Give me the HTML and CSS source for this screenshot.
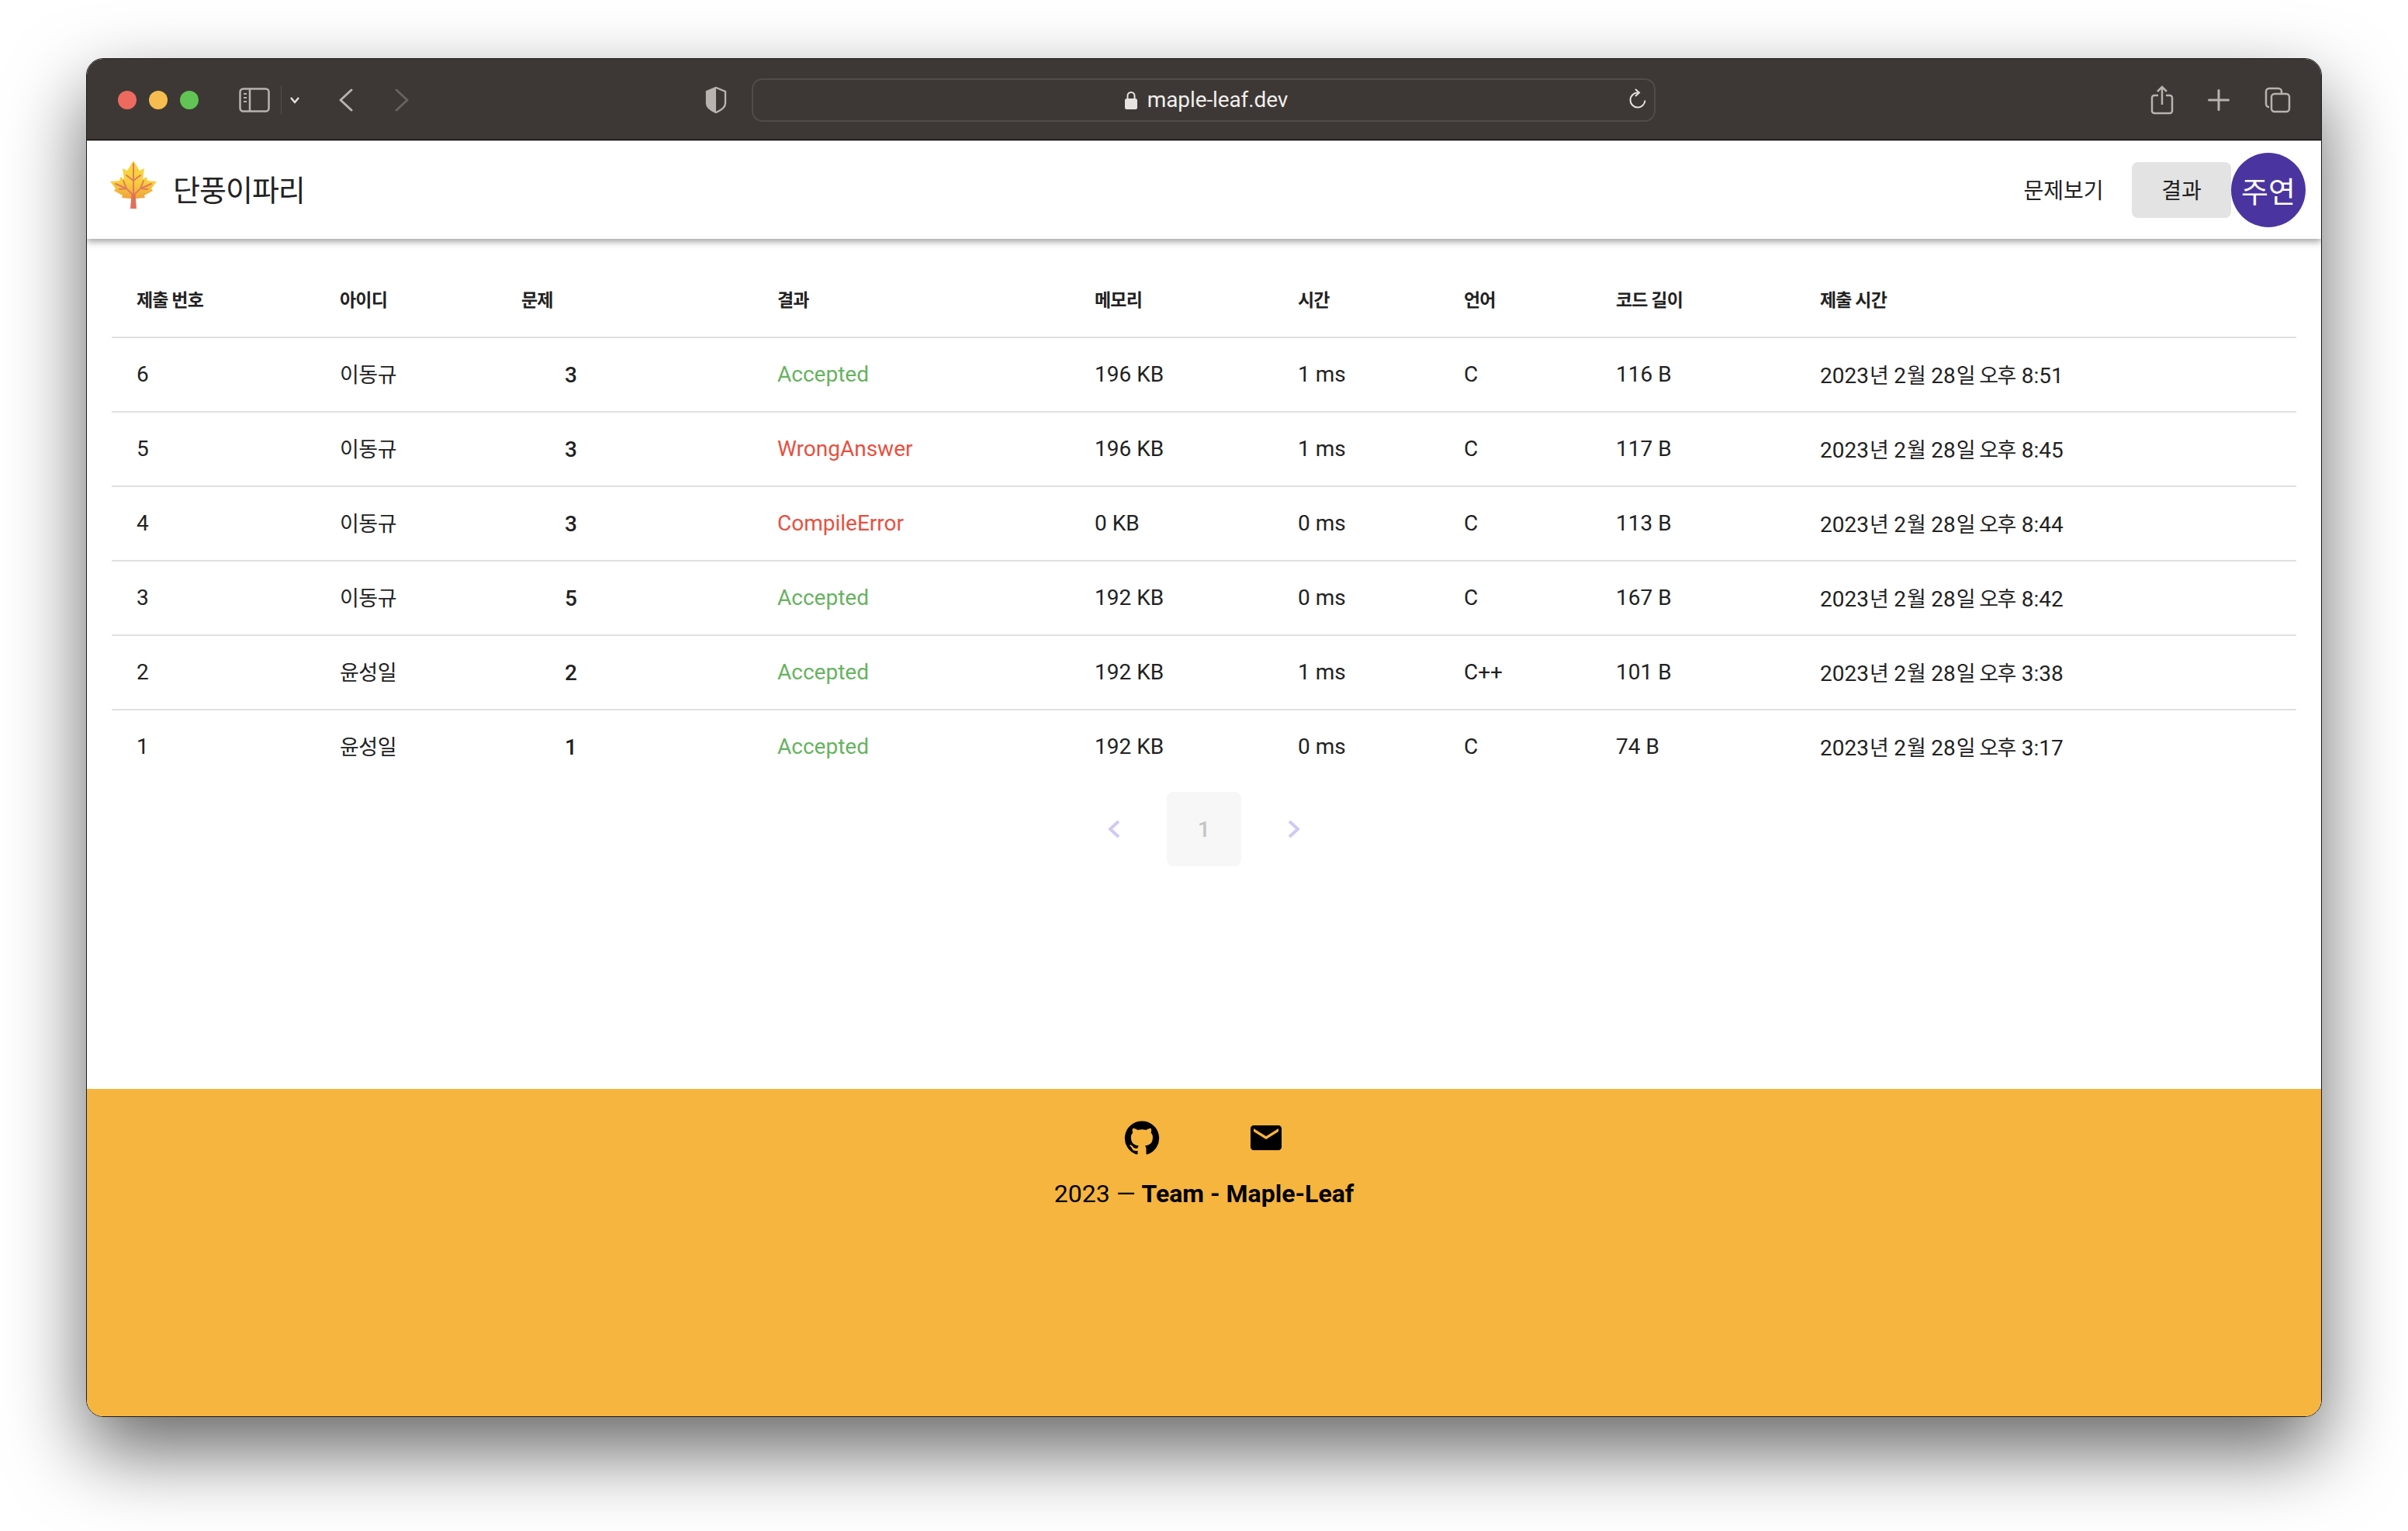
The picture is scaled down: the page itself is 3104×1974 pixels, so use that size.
FILE: index.html
```html
<!DOCTYPE html>
<html lang="ko">

<head>
    <meta charset="UTF-8">
    <title>단풍이파리</title>
    <link rel="stylesheet" href="styles.css">
</head>

<body>
    <div class="window">
        <div class="titlebar">
            <div class="lights">
                <span class="light red"></span>
                <span class="light yellow"></span>
                <span class="light green"></span>
            </div>
            <svg class="icon-sidebar" width="40" height="32" viewBox="0 0 40 32" fill="none" stroke="#b8b3af" stroke-width="2.5">
                <rect x="1.5" y="1.5" width="37" height="29" rx="4"/>
                <path d="M14 2v28"/>
                <path d="M6 8h4M6 13h4M6 18h4" stroke-width="2"/>
            </svg>
            <span class="sep"></span>
            <svg class="icon-down" width="14" height="10" viewBox="0 0 14 10" fill="none" stroke="#e8e4e1" stroke-width="2.4">
                <path d="M2 2l5 6 5-6"/>
            </svg>
            <svg class="icon-back" width="18" height="30" viewBox="0 0 18 30" fill="none" stroke="#b8b3af" stroke-width="3" stroke-linecap="round" stroke-linejoin="round">
                <path d="M16 2L2 15l14 13"/>
            </svg>
            <svg class="icon-forward" width="18" height="30" viewBox="0 0 18 30" fill="none" stroke="#68625f" stroke-width="3" stroke-linecap="round" stroke-linejoin="round">
                <path d="M2 2l14 13L2 28"/>
            </svg>
            <svg class="icon-shield" width="28" height="34" viewBox="0 0 28 34">
                <path d="M14 1l12 5v15c0 5-5 9-12 12C7 30 2 26 2 21V6z" fill="none" stroke="#b8b3af" stroke-width="2.4"/>
                <path d="M14 1L2 6v15c0 5 5 9 12 12z" fill="#b8b3af"/>
            </svg>
            <div class="address">
                <svg class="icon-lock" width="18" height="24" viewBox="0 0 18 24" fill="none">
                    <path d="M4.5 11V6.500a4.500 4.500 0 0 1 9 0V11" stroke="#e6e3e0" stroke-width="2"/>
                    <rect x="1" y="10" width="16" height="14" rx="2.500" fill="#e6e3e0"/>
                </svg>
                <span class="url">maple-leaf.dev</span>
                <svg class="icon-reload" width="24" height="28" viewBox="0 0 24 28" fill="none" stroke="#e6e3e0" stroke-width="2">
                    <path d="M12 5.500a9.500 9.500 0 1 0 9.500 10"/>
                    <path d="M9 1l5 4.500-5 4.500"/>
                </svg>
            </div>
            <svg class="icon-share" width="30" height="38" viewBox="0 0 30 38" fill="none" stroke="#b8b3af" stroke-width="2.500">
                <path d="M10 13H5a3 3 0 0 0-3 3v17a3 3 0 0 0 3 3h20a3 3 0 0 0 3-3V16a3 3 0 0 0-3-3h-5"/>
                <path d="M15 25V2M9 8l6-6 6 6"/>
            </svg>
            <svg class="icon-plus" width="28" height="28" viewBox="0 0 28 28" stroke="#b8b3af" stroke-width="3" stroke-linecap="round">
                <path d="M14 1.500v25M1.500 14h25"/>
            </svg>
            <svg class="icon-tabs" width="34" height="34" viewBox="0 0 34 34" fill="none" stroke="#b8b3af" stroke-width="2.500">
                <path d="M6 26a4 4 0 0 1-4-4V6a4 4 0 0 1 4-4h12a4 4 0 0 1 4 4v3"/>
                <rect x="9" y="9" width="23" height="23" rx="4"/>
            </svg>
        </div>

        <nav class="nav">
            <svg class="logo" width="60" height="64" viewBox="0 0 60 62">
                <defs>
                    <linearGradient id="leaf" x1="0" y1="0" x2="0" y2="1">
                        <stop offset="0" stop-color="#f9d640"/>
                        <stop offset="0.55" stop-color="#f8cf3f"/>
                        <stop offset="1" stop-color="#eea238"/>
                    </linearGradient>
                </defs>
                <path d="M30 0l8 13 6-3-2 14 5-3 1 5 12 1-7 9 2 3-11 6 1 3-11 1-4 1-4-1-11-1 1-3-11-6 2-3-7-9 12-1 1-5 5 3-2-14 6 3z" fill="url(#leaf)"/>
                <g fill="none" stroke="#e27a5c" stroke-width="2" stroke-linecap="round">
                    <path d="M30 4v44"/>
                    <path d="M21 19l9 7 9-7"/>
                    <path d="M7 30l14 6 9 9 9-9 14-6"/>
                    <path d="M12 37l9-1M48 37l-9-1M17 26l4 10M43 26l-4 10"/>
                </g>
                <path d="M27.500 44h5l1.500 18h-8z" fill="#e0705a"/>
            </svg>
            <span class="brand">단풍이파리</span>
            <div class="nav-right">
                <a class="nav-btn">문제보기</a>
                <a class="nav-btn active">결과</a>
                <span class="avatar">주연</span>
            </div>
        </nav>

        <main class="content">
            <table class="results">
                <colgroup>
                    <col class="c-no"><col class="c-id"><col class="c-prob"><col class="c-res"><col class="c-mem"><col class="c-time"><col class="c-lang"><col class="c-len"><col class="c-date">
                </colgroup>
                <thead>
                    <tr>
                        <th>제출 번호</th><th>아이디</th><th>문제</th><th>결과</th><th>메모리</th><th>시간</th><th>언어</th><th>코드 길이</th><th>제출 시간</th>
                    </tr>
                </thead>
                <tbody>
                    <tr>
                        <td>6</td><td class="ko">이동규</td><td class="prob">3</td><td class="ok">Accepted</td><td>196 KB</td><td>1 ms</td><td>C</td><td>116 B</td>
                        <td>2023<span class="ko">년</span> 2<span class="ko">월</span> 28<span class="ko">일 오후</span> 8:51</td>
                    </tr>
                    <tr>
                        <td>5</td><td class="ko">이동규</td><td class="prob">3</td><td class="bad">WrongAnswer</td><td>196 KB</td><td>1 ms</td><td>C</td><td>117 B</td>
                        <td>2023<span class="ko">년</span> 2<span class="ko">월</span> 28<span class="ko">일 오후</span> 8:45</td>
                    </tr>
                    <tr>
                        <td>4</td><td class="ko">이동규</td><td class="prob">3</td><td class="bad">CompileError</td><td>0 KB</td><td>0 ms</td><td>C</td><td>113 B</td>
                        <td>2023<span class="ko">년</span> 2<span class="ko">월</span> 28<span class="ko">일 오후</span> 8:44</td>
                    </tr>
                    <tr>
                        <td>3</td><td class="ko">이동규</td><td class="prob">5</td><td class="ok">Accepted</td><td>192 KB</td><td>0 ms</td><td>C</td><td>167 B</td>
                        <td>2023<span class="ko">년</span> 2<span class="ko">월</span> 28<span class="ko">일 오후</span> 8:42</td>
                    </tr>
                    <tr>
                        <td>2</td><td class="ko">윤성일</td><td class="prob">2</td><td class="ok">Accepted</td><td>192 KB</td><td>1 ms</td><td>C++</td><td>101 B</td>
                        <td>2023<span class="ko">년</span> 2<span class="ko">월</span> 28<span class="ko">일 오후</span> 3:38</td>
                    </tr>
                    <tr>
                        <td>1</td><td class="ko">윤성일</td><td class="prob">1</td><td class="ok">Accepted</td><td>192 KB</td><td>0 ms</td><td>C</td><td>74 B</td>
                        <td>2023<span class="ko">년</span> 2<span class="ko">월</span> 28<span class="ko">일 오후</span> 3:17</td>
                    </tr>
                </tbody>
            </table>

            <div class="pagination">
                <span class="page-arrow">
                    <svg width="20" height="26" viewBox="0 0 20 26" fill="none" stroke="#d2c8f4" stroke-width="4"><path d="M16 3L5 13l11 10"/></svg>
                </span>
                <span class="page-num">1</span>
                <span class="page-arrow">
                    <svg width="20" height="26" viewBox="0 0 20 26" fill="none" stroke="#d2c8f4" stroke-width="4"><path d="M4 3l11 10L4 23"/></svg>
                </span>
            </div>
        </main>

        <footer class="footer">
            <div class="footer-icons">
                <svg width="48" height="48" viewBox="0 0 24 24"><path d="M12 1.270a11 11 0 00-3.480 21.460c.550.090.730-.280.730-.550v-1.840c-3.030.640-3.670-1.460-3.670-1.460-.550-1.290-1.280-1.650-1.280-1.650-.920-.650.100-.650.100-.650 1.100 0 1.730 1.100 1.730 1.100.920 1.650 2.570 1.200 3.210.920a2 2 0 01.640-1.470c-2.470-.270-5.040-1.190-5.040-5.500 0-1.100.460-2.100 1.200-2.840a3.760 3.760 0 010-2.930s.910-.280 3.110 1.100c1.800-.490 3.700-.490 5.500 0 2.100-1.380 3.020-1.100 3.020-1.100a3.760 3.760 0 010 2.930c.830.740 1.200 1.740 1.200 2.940 0 4.210-2.570 5.130-5.040 5.400.450.370.820.920.820 2.020v3.030c0 .270.100.640.730.550A11 11 0 0012 1.270"/></svg>
                <svg width="48" height="48" viewBox="0 0 24 24"><path d="M20 4H4c-1.100 0-1.990.900-1.990 2L2 18c0 1.100.900 2 2 2h16c1.100 0 2-.900 2-2V6c0-1.100-.900-2-2-2zm0 4l-8 5-8-5V6l8 5 8-5v2z"/></svg>
            </div>
            <p class="copy">2023 — <b>Team - Maple-Leaf</b></p>
        </footer>
    </div>
</body>

</html>
```

FILE: styles.css
```css
* {
    box-sizing: border-box;
}

body {
    margin: 0;
    padding: 75px 0 0 111px;
    height: 1974px;
    overflow: hidden;
    background-color: #fff;
    font-family: Roboto, 'Noto Sans CJK KR', sans-serif;
    color: #222;
}

.window {
    display: flex;
    flex-direction: column;
    width: 2882px;
    height: 1752px;
    border: 1px solid #1c1c1c;
    border-radius: 22px;
    overflow: hidden;
    background-color: #fff;
}

body::before {
    content: "";
    position: absolute;
    left: 111px;
    top: 75px;
    width: 2882px;
    height: 1752px;
    border-radius: 22px;
    box-shadow: 0 44px 100px rgba(0, 0, 0, .6);
    z-index: -1;
}

.titlebar {
    display: flex;
    align-items: center;
    flex: none;
    height: 105px;
    padding: 1px 0 0 40px;
    background-color: #3d3835;
    border-bottom: 1px solid #000;
}

.lights {
    display: flex;
    gap: 16px;
}

.light {
    width: 24px;
    height: 24px;
    border-radius: 50%;
}

.red { background-color: #ee6a5f; }
.yellow { background-color: #f5bd4f; }
.green { background-color: #61c454; }

.icon-sidebar { margin-left: 52px; }

.sep {
    width: 1px;
    height: 36px;
    margin-left: 14px;
    background-color: #55504d;
}

.icon-down { margin-left: 10px; }
.icon-back { margin-left: 50px; }
.icon-forward { margin-left: 54px; }
.icon-shield { margin-left: 382px; }

.address {
    position: relative;
    display: flex;
    align-items: center;
    justify-content: center;
    gap: 12px;
    width: 1165px;
    height: 56px;
    margin-left: 32px;
    padding-left: 6px;
    border: 2px solid #514c49;
    border-radius: 14px;
    color: #f0eeec;
    font-size: 28px;
    letter-spacing: -.1px;
}

.icon-reload {
    position: absolute;
    right: 9px;
    top: 11px;
}

.icon-share { margin-left: 638px; }
.icon-plus { margin-left: 44px; }
.icon-tabs { margin-left: 45px; }

.nav {
    position: relative;
    z-index: 1;
    display: flex;
    align-items: center;
    flex: none;
    height: 127px;
    padding: 0 20px 0 30px;
    border-top: 1px solid #c4c4c4;
    background-color: #fff;
    box-shadow: 0 4px 8px rgba(0, 0, 0, .35);
}

.logo {
    margin-bottom: 14px;
}

.brand {
    margin-left: 21px;
    padding-bottom: 6px;
    font-family: 'Noto Sans CJK KR', sans-serif;
    font-size: 38px;
    letter-spacing: -1px;
}

.nav-right {
    display: flex;
    align-items: center;
    margin-left: auto;
}

.nav-btn {
    display: flex;
    align-items: center;
    justify-content: center;
    width: 152px;
    height: 72px;
    margin-right: 12px;
    padding-bottom: 3px;
    border-radius: 8px;
    font-family: 'Noto Sans CJK KR', sans-serif;
    font-size: 28px;
}

.nav-btn.active {
    width: 128px;
    margin-right: 0;
    background-color: #e3e3e3;
}

.avatar {
    display: flex;
    align-items: center;
    justify-content: center;
    width: 96px;
    height: 96px;
    padding-bottom: 2px;
    border-radius: 50%;
    background-color: #4a35a0;
    color: #fff;
    font-family: 'Noto Sans CJK KR', sans-serif;
    font-size: 38px;
}

.content {
    flex: 1;
    padding: 31px 32px 0;
}

.results {
    width: 2816px;
    table-layout: fixed;
    border-collapse: collapse;
}

.c-no { width: 262px; }
.c-id { width: 234px; }
.c-prob { width: 330px; }
.c-res { width: 409px; }
.c-mem { width: 262px; }
.c-time { width: 214px; }
.c-lang { width: 196px; }
.c-len { width: 263px; }
.c-date { width: 646px; }

.results th,
.results td {
    height: 96px;
    padding: 0 0 2px 32px;
    border-bottom: 2px solid #e0e0e0;
    text-align: left;
    font-size: 28px;
}

.results th {
    padding-bottom: 3px;
    font-family: 'Noto Sans CJK KR', sans-serif;
    font-size: 23px;
    font-weight: 700;
    letter-spacing: -.8px;
    word-spacing: -1px;
}

.results tbody tr:last-child td {
    border-bottom: none;
}

.results .ko {
    padding-bottom: 4px;
    font-family: 'Noto Sans CJK KR', sans-serif;
    font-size: 27px;
    letter-spacing: -.5px;
}

.results td .ko {
    padding-bottom: 0;
    margin: 0 1px;
    letter-spacing: -1.5px;
}

.results .prob {
    padding-left: 88px;
    padding-bottom: 0;
    font-weight: 500;
}

.ok { color: #66b35f; }
.bad { color: #e8503f; }

.pagination {
    display: flex;
    justify-content: center;
    gap: 20px;
    margin-top: 10px;
}

.page-arrow,
.page-num {
    display: flex;
    align-items: center;
    justify-content: center;
    width: 96px;
    height: 96px;
}

.page-num {
    border-radius: 8px;
    background-color: #f7f7f7;
    color: #c4c4c4;
    font-size: 28px;
    font-weight: 500;
}

.footer {
    display: flex;
    flex-direction: column;
    align-items: center;
    flex: none;
    height: 422px;
    padding-top: 39px;
    background-color: #f6b53f;
    color: #000;
}

.footer-icons {
    display: flex;
    gap: 112px;
}

.copy {
    margin: 26px 0 0;
    font-size: 32px;
    line-height: 44px;
}
```
